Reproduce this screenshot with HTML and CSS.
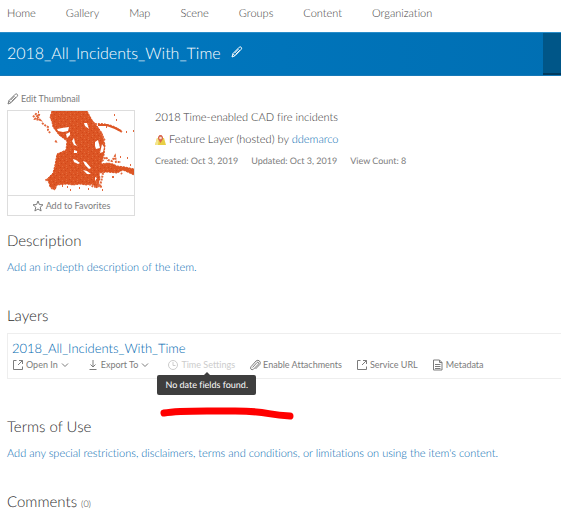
FILE: index.html
```
<!doctype html>
<html lang="en">
<head>
<meta charset="utf-8">
<title>2018_All_Incidents_With_Time</title>
<link rel="stylesheet" href="styles.css">
</head>
<body>
	<svg class="defs" aria-hidden="true">
		<symbol id="pencil" viewBox="0 0 12 12"><path d="M1 11l1-3.500L8.300 1.200q1-.8 1.900.1t.1 1.900L4 9.700zM2 7.800l2 2M7.500 3l-4 4.200M8.800 4.200L4.600 8.500"/></symbol>
		<symbol id="launch" viewBox="0 0 12 12"><path d="M4.500 1.500h-3v9h9v-3M7 1.500h3.500V5M10.500 1.500L6 6"/></symbol>
		<symbol id="chevron" viewBox="0 0 8 8"><path d="M1 2.500l3 3 3-3"/></symbol>
	</svg>
	<nav class="nav">
		<a href="#">Home</a>
		<a href="#">Gallery</a>
		<a href="#">Map</a>
		<a href="#">Scene</a>
		<a href="#">Groups</a>
		<a href="#">Content</a>
		<a href="#">Organization</a>
	</nav>
	<header class="banner">
		<h1>2018_All_Incidents_With_Time</h1>
		<button class="edit-title" aria-label="Edit title"><svg class="icon"><use href="#pencil"/></svg></button>
		<div class="tab"></div>
	</header>
	<main class="page">
		<section class="item">
			<div class="side">
				<button class="tool"><svg class="icon"><use href="#pencil"/></svg>Edit Thumbnail</button>
				<div class="card">
					<svg class="thumb" viewBox="0 0 126 84">
						<pattern id="grain" width="11" height="7" patternUnits="userSpaceOnUse">
							<path fill="#dc5524" d="M0 0h11v7H0z"/>
							<path fill="#d0481a" d="M1 0h1v1H1zM4 1h1v1H4zM9 3h1v1H9zM2 3h1v1H2zM6 5h1v1H6zM8 0h1v1H8z"/>
							<path fill="#e46c3b" d="M3 0h1v1H3zM0 2h1v1H0zM7 4h1v1H7zM3 5h1v1H3zM10 6h1v1H10zM7 2h1v1H7z"/>
						</pattern>
						<path class="mass" d="M44 0L42 6l2 5 1 5 6 8 8 6-1 9-9 4-2 11-2 8-6 6 2 4 1 4 5 3 2-5 10-1 6 1 7-1 6 1 6-1 5 4 3-10-1-5 8-1 10 1 6-3 11 5v-6l-9-2-8-1-4-2-5-1-7 1 3-9 1-10-3-12-5-7-5-6-5-9z"/>
						<path class="hole" d="M49 18l5-1 7-1-1 4-5 1-5-1zM58 23l4-2v3l-3 3zM66 27l1 5 2 3-3-1-2-4zM66 39l3 1v2h-3zM76 12l1 3 4 3-2-6zM87 31l3-2 1 4 1 4-4 1-1-3zM94 33l2 3-1 5-3 1zM65 48l3 1 4 3-2 1-4-2zM75 50l3 1 5 6-2 1-4-4zM75 59l4 1 4 3-4 0zM87 66l2 1-2 3z"/>
						<path class="dots" d="M25 6l3-3 3 1-1 3 2 2-5-1 3-4M30 1h1M34 12l4 3 2 1 0 3 2 3 0 0M47 30l2 1 0 1M84 14l3-1 3 0 5 0 4 1 5 1 4 2 3 2 3 2M106 4h1M108 9h1M118 21h1M125 20h1M91 20l4 6 2 4M94 50l4-4 2 3 4 1 3-5 1 6 5 0M112 46h1M119 47h1M122 54h1M88 70l4 5 2-8 1-5M104 66h3M81 73l5 3 4-1 5 1M94 79h1M59 76h1M62 79h1M71 77h1M80 78h1M43 77l4 1M54 75h1M38 68l1 3M99 16h-1M113 62l1 1"/>
						<path class="trail" d="M90 14l9 0 8 3 6 3M107 56l18 5"/>
					</svg>
					<button class="favorite"><svg class="icon"><path d="M6 1l1.400 3.500 3.600.3-2.800 2.400.9 3.800L6 9l-3.100 2 .9-3.800L1 4.800l3.600-.3z"/></svg>Add to Favorites</button>
				</div>
			</div>
			<div class="info">
				<p class="summary">2018 Time-enabled CAD fire incidents</p>
				<p class="type"><svg class="layer-icon" viewBox="0 0 11 11"><path fill="#e8cf45" d="M2 3h7l2 7H0z"/><path fill="#f4e58c" d="M2 3h2L3 10H0z"/><path fill="#d9694e" d="M5.500 8L3 4V2l1.500-2h2L8 2v2z"/><circle cx="5.500" cy="3" r="1.300" fill="#f6dfd0"/></svg><span>Feature Layer (hosted) by <a href="#">ddemarco</a></span></p>
				<p class="dates"><span>Created: Oct 3, 2019</span><span>Updated: Oct 3, 2019</span><span>View Count: 8</span></p>
			</div>
		</section>
		<section class="block">
			<h2>Description</h2>
			<a href="#">Add an in-depth description of the item.</a>
		</section>
		<section class="layers">
			<h2>Layers</h2>
			<div class="layer">
				<a class="layer-name" href="#">2018_All_Incidents_With_Time</a>
				<div class="actions">
					<button class="tool menu"><svg class="icon"><use href="#launch"/></svg>Open In<svg class="chevron"><use href="#chevron"/></svg></button>
					<button class="tool menu"><svg class="icon"><path d="M6 1v7M3.500 5.500L6 8l2.500-2.500M2.500 10.500h7"/></svg>Export To<svg class="chevron"><use href="#chevron"/></svg></button>
					<div class="time">
						<button class="tool" disabled aria-describedby="tip"><svg class="icon"><circle cx="6" cy="6" r="4.500"/><path d="M6 3v3.500h2.500"/></svg>Time Settings</button>
						<div class="tooltip" id="tip" role="tooltip">No date fields found.</div>
						<svg class="marker" viewBox="0 0 134 14"><path d="M4 7C20 4 40 5 75 5S105 9 130 10"/></svg>
					</div>
					<button class="tool"><svg class="icon"><path d="M3.500 8.500l4.500-5q1-.8 1.500 0t0 1.500L4.500 10.200q-1.500 1-2.500 0t0-2.500l5-5.700q2-1.500 3.500 0t.3 3.500L6.500 10"/></svg>Enable Attachments</button>
					<button class="tool"><svg class="icon"><use href="#launch"/></svg>Service URL</button>
					<button class="tool"><svg class="icon"><path d="M1.500 1h6L10 3.500V11H1.500zM7.500 1v2.500H10M3 5.500h5.500M3 7.500h5.500M3 9.500h5.500"/></svg>Metadata</button>
				</div>
			</div>
		</section>
		<section class="block">
			<h2>Terms of Use</h2>
			<a href="#">Add any special restrictions, disclaimers, terms and conditions, or limitations on using the item's content.</a>
		</section>
		<section class="comments">
			<h2>Comments <small>(0)</small></h2>
		</section>
	</main>
</body>
</html>
```
FILE: styles.css
```
*{
	box-sizing:border-box;
	margin:0;
	padding:0;
}
body{
	background:#fff;
	color:#2e2e2e;
	font:300 11px/16px Lato, "Open Sans", sans-serif;
	font-variant-ligatures:none;
	text-rendering:geometricPrecision;
}
a{
	color:#0068b0;
	text-decoration:none;
}
button{
	border:0;
	background:none;
	color:inherit;
	font:inherit;
}
h1, h2{
	font-weight:300;
}
.defs{
	display:none;
}
.icon{
	width:12px;
	height:12px;
	flex:none;
	fill:none;
	stroke:currentColor;
}
.nav{
	display:flex;
	gap:30px;
	height:32px;
	padding:6px 7px;
}
.nav a{
	color:#3a3a3a;
}
.banner{
	display:flex;
	align-items:center;
	gap:10px;
	height:44px;
	padding-left:7px;
	background:linear-gradient(90deg, #0079c1, #006fb3);
	border-top:1px solid #288dca;
	border-bottom:1px solid #1679b8;
	color:#fff;
}
.banner h1{
	font-size:16px;
	line-height:20px;
}
.edit-title{
	display:flex;
	padding-bottom:4px;
}
.tab{
	align-self:stretch;
	width:18px;
	margin-left:auto;
	background:#005688;
	border-bottom:2px solid #003a5e;
}
.page{
	padding-left:7px;
}
.item{
	display:flex;
	gap:20px;
	padding-top:15px;
}
.side{
	width:128px;
	flex:none;
}
.tool{
	display:flex;
	align-items:center;
	gap:2px;
	color:#7c7c7c;
	font-size:9px;
	font-weight:400;
	line-height:16px;
	white-space:nowrap;
}
.card{
	margin-top:3px;
	border:1px solid #ddd;
}
.thumb{
	display:block;
	width:100%;
}
.mass{
	fill:url(#grain);
	stroke:#dc5322;
	stroke-linejoin:round;
	stroke-dasharray:2 1;
}
.hole{
	fill:#fff;
}
.dots{
	fill:none;
	stroke:#e2683c;
	stroke-width:2;
	stroke-dasharray:2 1;
}
.trail{
	fill:none;
	stroke:#dd5624;
	stroke-width:2;
}
.favorite{
	display:flex;
	align-items:center;
	justify-content:center;
	gap:2px;
	width:100%;
	height:20px;
	border-top:1px solid #ddd;
	color:#7c7c7c;
	font-size:9px;
	font-weight:400;
}
.info{
	padding-top:19px;
}
.type{
	display:flex;
	align-items:center;
	gap:3px;
	margin-top:6px;
}
.layer-icon{
	width:11px;
	height:11px;
}
.dates{
	display:flex;
	gap:13px;
	margin-top:5px;
	color:#7c7c7c;
	font-size:9px;
	font-weight:400;
}
h2{
	font-size:15px;
	line-height:20px;
}
.block{
	padding-top:15px;
}
.block a{
	display:block;
	margin-top:9px;
}
.layers{
	padding:30px 0 23px;
}
.layer{
	margin-top:7px;
	padding:5px 4px;
	border:1px solid #eee;
	border-right:0;
}
.layer-name{
	display:block;
	font-size:13px;
	line-height:18px;
}
.actions{
	display:flex;
	gap:14px;
}
.menu{
	margin-right:4px;
}
.chevron{
	width:8px;
	height:8px;
	margin-left:1px;
	fill:none;
	stroke:currentColor;
}
.time{
	position:relative;
}
.time .tool{
	color:#ccc;
}
.tooltip{
	position:absolute;
	top:18px;
	left:-10px;
	padding:2px 8px;
	border-radius:2px;
	background:#3e3e3e;
	color:#fff;
	font-size:9px;
	font-weight:400;
	white-space:nowrap;
}
.tooltip::before{
	content:"";
	position:absolute;
	left:50%;
	top:-3px;
	margin-left:-3px;
	border:3px solid transparent;
	border-top:0;
	border-bottom-color:#3e3e3e;
}
.marker{
	position:absolute;
	top:49px;
	left:-7px;
	width:134px;
	fill:none;
	stroke:#f00;
	stroke-width:7;
	stroke-linecap:round;
}
.comments{
	padding-top:30px;
}
small{
	font-size:9px;
}
```
